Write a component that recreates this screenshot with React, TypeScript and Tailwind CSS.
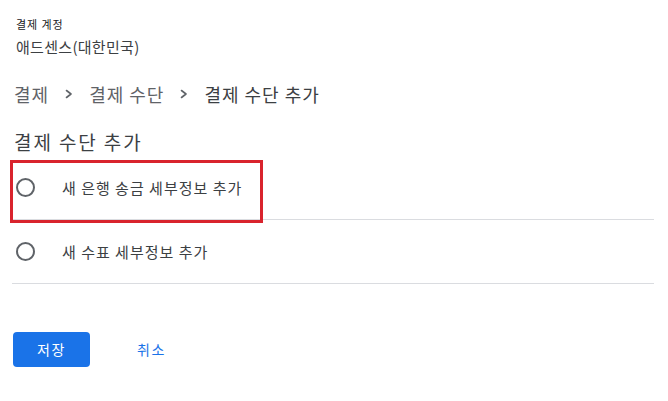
import React from "react";

const font = { fontFamily: '"Noto Sans CJK KR", "Noto Sans", sans-serif' };

const Chevron: React.FC = () => (
  <svg width="8" height="10" viewBox="0 0 8 10" fill="none" className="shrink-0">
    <path d="M1.5 1.5 L6 5 L1.5 8.5" stroke="#5f6368" strokeWidth="1.6" strokeLinecap="round" strokeLinejoin="round" />
  </svg>
);

const RadioRow: React.FC<{ label: string }> = ({ label }) => (
  <div className="flex items-center h-[64px] border-b border-[#dadce0] pl-[4px]">
    <span className="w-[19px] h-[19px] rounded-full border-2 border-[#5f6368] shrink-0"></span>
    <span className="ml-[27px] text-[15px] leading-[20px] tracking-[1px] text-[#3c4043]">{label}</span>
  </div>
);

const App: React.FC = () => {
  return (
    <div className="w-[668px] h-[401px] bg-white overflow-hidden pt-[16px]" style={font}>
      <div className="px-[16px]">
        <div className="text-[11px] leading-[16px] tracking-[0.9px] text-[#202124]">결제 계정</div>
        <div className="mt-[5px] text-[15px] leading-[20px] tracking-[0.3px] text-[#3c4043]">애드센스(대한민국)</div>
      </div>

      <div className="mt-[23px] pl-[14px] flex items-center gap-[16px] text-[18px] leading-[28px] tracking-[1px]">
        <span className="text-[#5f6368]">결제</span>
        <Chevron />
        <span className="text-[#5f6368]">결제 수단</span>
        <Chevron />
        <span className="text-[#3c4043]">결제 수단 추가</span>
      </div>

      <h2 className="mt-[20px] pl-[14px] text-[19px] leading-[28px] tracking-[1.9px] text-[#3c4043]">결제 수단 추가</h2>

      <div className="relative ml-[12px] mr-[14px]">
        <RadioRow label="새 은행 송금 세부정보 추가" />
        <RadioRow label="새 수표 세부정보 추가" />
        <div className="absolute left-[-2px] top-[4px] w-[253px] h-[63px] border-[3px] border-[#d9232d]"></div>
      </div>

      <div className="mt-[48px] pl-[13px] flex items-center">
        <button className="w-[77px] h-[35px] rounded-[4px] bg-[#1a73e8] text-white text-[14px] tracking-[1.5px]">저장</button>
        <button className="ml-[47px] text-[14px] tracking-[1.5px] text-[#1a73e8]">취소</button>
      </div>
    </div>
  );
};

export default App;
